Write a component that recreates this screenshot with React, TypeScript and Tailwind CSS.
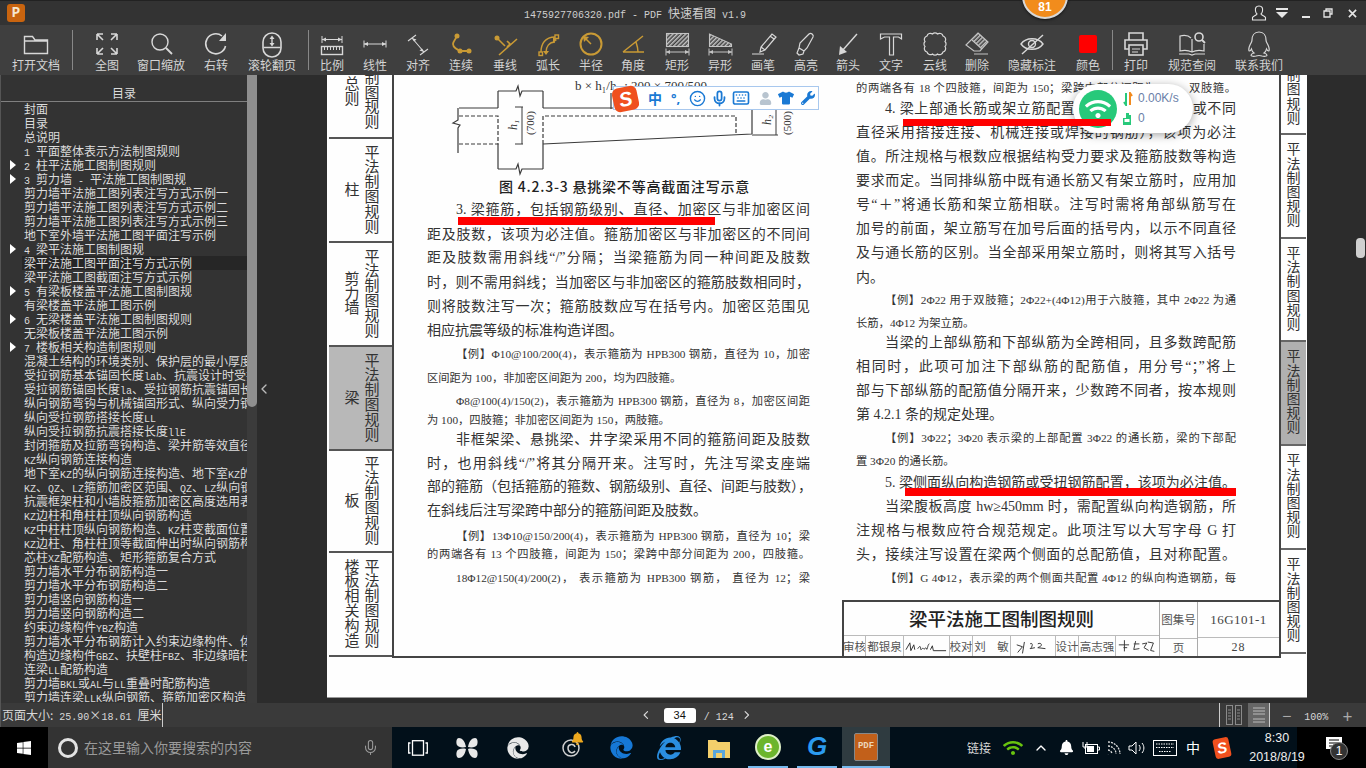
import { ChevronLeft, ChevronRight, ChevronUp, Keyboard, Mic, Smile } from "lucide-react";
import { FaBell, FaEdge, FaInternetExplorer, FaTshirt, FaUser, FaWifi, FaWindows, FaWrench } from "react-icons/fa";

const gold = "text-[#c99a35]";

const Ico = ({ children, className = "" }: { children: React.ReactNode; className?: string }) => (
  <svg viewBox="0 0 32 32" className={`w-8 h-8 shrink-0 ${className}`} fill="none" stroke="currentColor" strokeWidth="1.4">
    {children}
  </svg>
);

const Hatch = ({ id }: { id: string }) => (
  <defs>
    <pattern id={id} width="3" height="3" patternUnits="userSpaceOnUse" patternTransform="rotate(-45)">
      <rect width="3" height="1.5" fill="currentColor" stroke="none" />
    </pattern>
  </defs>
);

const Dim = ({ y, x1 = 6, x2 = 26 }: { y: number; x1?: number; x2?: number }) => (
  <>
    <path d={`M${x1} ${y - 3.5}v7M${x2} ${y - 3.5}v7M${x1} ${y}H${x2}`} strokeWidth="1" />
    <path d={`M${x1} ${y}l4-2v4zM${x2} ${y}l-4-2v4z`} fill="currentColor" stroke="none" />
  </>
);

const tools = [
  { w: "w-[72px]", label: "打开文档", icon: <Ico><path d="M4.5 25.5V8.5h8l2.5 3.5h12.5v13.5zM4.5 13h23" /></Ico> },
  { sep: true, w: "mr-[13px]" },
  { w: "w-[42px]", label: "全图", icon: <Ico><path d="M6 6h6M6 6v6M6 6l6 6M26 6h-6M26 6v6M26 6l-6 6M6 26h6M6 26v-6M6 26l6-6M26 26h-6M26 26v-6M26 26l-6-6" strokeWidth="1.6" /></Ico> },
  { w: "w-[66px]", label: "窗口缩放", icon: <Ico><circle cx="15" cy="14" r="8" /><path d="M21 20l6 6" strokeWidth="1.8" /></Ico> },
  { w: "w-[44px]", label: "右转", icon: <Ico><path d="M25.5 18A10 10 0 1 1 22 8" strokeWidth="1.6" /><path d="M26 5v8h-7z" fill="currentColor" stroke="none" /></Ico> },
  { w: "w-[68px]", label: "滚轮翻页", icon: <Ico><rect x="7" y="5" width="18" height="24" rx="9" strokeWidth="1.6" /><path d="M7.5 19.5h17M16 11v5" /><path d="M16 7.5l2.5 3.5h-5zM16 18.5l2.5-3.5h-5z" fill="currentColor" stroke="none" /></Ico> },
  { sep: true, w: "ml-[2px]" },
  { w: "w-[46px]", label: "比例", icon: <Ico><Dim y={11.5} /><rect x="5.5" y="18.5" width="21" height="8" /><path d="M8.5 19v3M11.5 19v3M14.5 19v3M17.5 19v3M20.5 19v3M23.5 19v3" strokeWidth="1" /></Ico> },
  { w: "w-[40px]", label: "线性", icon: <Ico><Dim y={16} x1={5} x2={27} /></Ico> },
  { w: "w-[46px]", label: "对齐", icon: <Ico><path d="M6 13l8-6M18 27l8-6M10 10l12 14" strokeWidth="1.1" /><path d="M10 10l4.5 1.5-2.5 2zM22 24l-4.5-1.5 2.5-2z" fill="currentColor" stroke="none" /></Ico> },
  { w: "w-[40px]", label: "连续", tone: gold, icon: <Ico><path d="M12 8c-1 3-4 5-4 8 0 3 4 6 8 7h8" strokeWidth="1.8" /><circle cx="12" cy="8" r="2.5" fill="currentColor" stroke="none" /><circle cx="15" cy="23" r="2.5" fill="currentColor" stroke="none" /><circle cx="24" cy="23" r="2.5" fill="currentColor" stroke="none" /></Ico> },
  { w: "w-[48px]", label: "垂线", tone: gold, icon: <Ico><path d="M28 11L10 27M8 10l8 8M18 13l3 3-3 3" strokeWidth="1.6" /><circle cx="8" cy="10" r="2.5" fill="currentColor" stroke="none" /></Ico> },
  { w: "w-[38px]", label: "弧长", tone: gold, icon: <Ico><path d="M9 24c0-8 4-15 14-15M14 24c0-5 3-10 9-10" /><rect x="7" y="24" width="3.5" height="3.5" /><rect x="23" y="7" width="3.5" height="3.5" /><path d="M14 27l-3-4h6zM25 12l-4-3v6z" fill="currentColor" stroke="none" /></Ico> },
  { w: "w-[48px]", label: "半径", tone: gold, icon: <Ico><circle cx="16" cy="16" r="10.5" strokeWidth="2" /><path d="M16 16l-6-6" strokeWidth="1.5" /><path d="M8 8l6 1-5 5z" fill="currentColor" stroke="none" /></Ico> },
  { w: "w-[36px]", label: "角度", tone: gold, icon: <Ico><path d="M6 24h21M6 24L26 8M19 14c1 3 2 6 2 10" strokeWidth="1.5" /></Ico> },
  { w: "w-[52px]", label: "矩形", icon: <Ico className="text-[#c4c4c4]"><Hatch id="h1" /><rect x="5.5" y="5.5" width="22" height="13" fill="url(#h1)" strokeWidth="1.1" /><Dim y={24} x1={5} x2={28} /></Ico> },
  { w: "w-[34px]", label: "异形", icon: <Ico className="text-[#c4c4c4]"><Hatch id="h2" /><path d="M5.5 6v12.5h22V16z" fill="url(#h2)" strokeWidth="1.1" /><Dim y={24} x1={5} x2={28} /></Ico> },
  { w: "w-[52px]", label: "画笔", icon: <Ico><path d="M5 26h12M13 24l1-5 11-13 4 3-11 13zM14 19l4 3M23 8l4 3" strokeWidth="1.2" /></Ico> },
  { w: "w-[34px]", label: "高亮", icon: <Ico><path d="M9 27l-2-2 2-5 5 3-1 3zM9 20l1-5 9-9c2-2 5 1 4 3l-6 11-3 3z" strokeWidth="1.2" /></Ico> },
  { w: "w-[50px]", label: "箭头", icon: <Ico><path d="M25 6L10 23" /><path d="M7 27l1-9 7 6z" fill="currentColor" stroke="none" /></Ico> },
  { w: "w-[36px]", label: "文字", icon: <Ico><path d="M5.5 6h21v5l-3-2h-5v18h-4V9h-5l-4 2z" strokeWidth="1.2" /></Ico> },
  { w: "w-[52px]", label: "云线", icon: <Ico><path d="M8 8a3.5 3.5 0 0 1 5.5-2a3.5 3.5 0 0 1 5 0a3.5 3.5 0 0 1 5.5 2a3.5 3.5 0 0 1 2 5.5a3.5 3.5 0 0 1 0 5a3.5 3.5 0 0 1-2 5.5a3.5 3.5 0 0 1-5.5 2a3.5 3.5 0 0 1-5 0a3.5 3.5 0 0 1-5.5-2a3.5 3.5 0 0 1-2-5.5a3.5 3.5 0 0 1 0-5a3.5 3.5 0 0 1 2-5.5z" strokeWidth="1.2" /></Ico> },
  { w: "w-[32px]", label: "删除", icon: <Ico className="text-[#c4c4c4]"><Hatch id="h3" /><path d="M17 5l10 9-8 9h-6l-8-6z" strokeWidth="1.2" /><path d="M17 5l10 9-6 7-10-9z" fill="url(#h3)" stroke="none" /><path d="M11 12l10 9M13 26h14" strokeWidth="1.2" /></Ico> },
  { w: "w-[78px]", label: "隐藏标注", icon: <Ico><path d="M5 16c5-7 17-7 22 0-5 7-17 7-22 0z" /><circle cx="16" cy="16" r="3.5" /><path d="M27 7L6 26" /></Ico> },
  { w: "w-[34px]", label: "颜色", icon: <div className="w-8 h-8 flex items-center justify-center"><div className="w-[18px] h-[18px] rounded-[2px] bg-[#ff0000]" /></div> },
  { sep: true, w: "ml-[7px]" },
  { w: "w-[46px]", label: "打印", icon: <Ico><path d="M9 12V5h14v7M9 21H5V12h22v9h-4" strokeWidth="1.6" /><rect x="9" y="17" width="14" height="10" strokeWidth="1.6" /><path d="M12 21h8M12 24h6" strokeWidth="1" /></Ico> },
  { w: "w-[66px]", label: "规范查阅", icon: <Ico><path d="M15 10c-3-3-7-3-11-2v15c4-1 8-1 12 1 4-2 8-2 12-1v-7M16 11v13M3 26h10l3 1 3-1h10" strokeWidth="1.2" /><circle cx="23" cy="9" r="4" strokeWidth="1.6" /><path d="M26 12l3 3" strokeWidth="1.8" /></Ico> },
  { w: "w-[68px]", label: "联系我们", icon: <Ico><path d="M16 4c-5 0-7 4-7 8 0 2-1 3-2 5-1.5 3-1.5 6-.5 6 .7 0 1.5-1 2-2 .3 1.5 1 3 2.5 4-1.5.5-3 1.2-3 2.2 0 1.2 3 1.3 5 .8 1-.3 2-.5 3-.5s2 .2 3 .5c2 .5 5 .4 5-.8 0-1-1.5-1.7-3-2.2 1.5-1 2.2-2.5 2.5-4 .5 1 1.3 2 2 2 1 0 1-3-.5-6-1-2-2-3-2-5 0-4-2-8-7-8z" strokeWidth="1.2" /></Ico> },
] as { w: string; label?: string; icon?: React.ReactNode; tone?: string; sep?: boolean }[];

// the app's bitmap font has half-width latin, so latin runs get their own span
const Mixed = ({ text }: { text: string }) => (
  <>
    {text.split(/([\x00-\x7f]+)/).map((part, i) =>
      i % 2 ? (
        <span key={i} className="font-['Liberation_Mono',monospace] text-[10px] whitespace-pre">
          {part}
        </span>
      ) : (
        part
      )
    )}
  </>
);

const toc: [string, boolean?, boolean?][] = [
  ["封面"], ["目录"], ["总说明"], ["1 平面整体表示方法制图规则"],
  ["2 柱平法施工图制图规则", true], ["3 剪力墙 - 平法施工图制图规", true],
  ["剪力墙平法施工图列表注写方式示例一"], ["剪力墙平法施工图列表注写方式示例二"], ["剪力墙平法施工图列表注写方式示例三"],
  ["地下室外墙平法施工图平面注写示例"], ["4 梁平法施工图制图规", true],
  ["梁平法施工图平面注写方式示例", false, true], ["梁平法施工图截面注写方式示例"],
  ["5 有梁板楼盖平法施工图制图规", true], ["有梁楼盖平法施工图示例"],
  ["6 无梁楼盖平法施工图制图规则", true], ["无梁板楼盖平法施工图示例"], ["7 楼板相关构造制图规则", true],
  ["混凝土结构的环境类别、保护层的最小厚度"], ["受拉钢筋基本锚固长度lab、抗震设计时受拉钢筋"],
  ["受拉钢筋锚固长度la、受拉钢筋抗震锚固长度"], ["纵向钢筋弯钩与机械锚固形式、纵向受力钢筋"],
  ["纵向受拉钢筋搭接长度LL"], ["纵向受拉钢筋抗震搭接长度llE"], ["封闭箍筋及拉筋弯钩构造、梁并筋等效直径"],
  ["KZ纵向钢筋连接构造"], ["地下室KZ的纵向钢筋连接构造、地下室KZ的"], ["KZ、QZ、LZ箍筋加密区范围、QZ、LZ纵向钢筋"],
  ["抗震框架柱和小墙肢箍筋加密区高度选用表"], ["KZ边柱和角柱柱顶纵向钢筋构造"], ["KZ中柱柱顶纵向钢筋构造、KZ柱变截面位置"],
  ["KZ边柱、角柱柱顶等截面伸出时纵向钢筋构造"], ["芯柱XZ配筋构造、矩形箍筋复合方式"],
  ["剪力墙水平分布钢筋构造一"], ["剪力墙水平分布钢筋构造二"], ["剪力墙竖向钢筋构造一"], ["剪力墙竖向钢筋构造二"],
  ["约束边缘构件YBZ构造"], ["剪力墙水平分布钢筋计入约束边缘构件、体"], ["构造边缘构件GBZ、扶壁柱FBZ、非边缘暗柱"],
  ["连梁LL配筋构造"], ["剪力墙BKL或AL与LL重叠时配筋构造"], ["剪力墙连梁LLK纵向钢筋、箍筋加密区构造"],
];

type Line = { h: string; t: string; small?: boolean; indent?: string; left?: boolean };

const leftLines: Line[] = [
  { h: "h-[25px]", indent: "pl-[29px]", t: "3. 梁箍筋,包括钢筋级别、直径、加密区与非加密区间" },
  { h: "h-[23px]", t: "距及肢数,该项为必注值。箍筋加密区与非加密区的不同间" },
  { h: "h-[25px]", t: "距及肢数需用斜线“/”分隔;当梁箍筋为同一种间距及肢数" },
  { h: "h-[24px]", t: "时,则不需用斜线;当加密区与非加密区的箍筋肢数相同时," },
  { h: "h-[24px]", t: "则将肢数注写一次;箍筋肢数应写在括号内。加密区范围见" },
  { h: "h-[23px]", t: "相应抗震等级的标准构造详图。", left: true },
  { h: "h-[24px]", small: true, indent: "pl-[29px]", t: "【例】Φ10@100/200(4),表示箍筋为 HPB300 钢筋,直径为 10,加密" },
  { h: "h-[23px]", small: true, left: true, t: "区间距为 100,非加密区间距为 200,均为四肢箍。" },
  { h: "h-[19px]", small: true, indent: "pl-[29px]", t: "Φ8@100(4)/150(2),表示箍筋为 HPB300 钢筋,直径为 8,加密区间距" },
  { h: "h-[20px]", small: true, left: true, t: "为 100,四肢箍;非加密区间距为 150,两肢箍。" },
  { h: "h-[24px]", indent: "pl-[29px]", t: "非框架梁、悬挑梁、井字梁采用不同的箍筋间距及肢数" },
  { h: "h-[23px]", t: "时,也用斜线“/”将其分隔开来。注写时,先注写梁支座端" },
  { h: "h-[24px]", t: "部的箍筋(包括箍筋的箍数、钢筋级别、直径、间距与肢数)," },
  { h: "h-[25px]", left: true, t: "在斜线后注写梁跨中部分的箍筋间距及肢数。" },
  { h: "h-[18px]", small: true, indent: "pl-[29px]", t: "【例】13Φ10@150/200(4),表示箍筋为 HPB300 钢筋,直径为 10;梁" },
  { h: "h-[24px]", small: true, t: "的两端各有 13 个四肢箍,间距为 150;梁跨中部分间距为 200,四肢箍。" },
  { h: "h-[24px]", small: true, indent: "pl-[29px]", t: "18Φ12@150(4)/200(2), 表示箍筋为 HPB300 钢筋, 直径为 12;梁" },
];

const rightLines: Line[] = [
  { h: "h-[21px]", small: true, t: "的两端各有 18 个四肢箍,间距为 150;梁跨中部分间距为 200,双肢箍。" },
  { h: "h-[24px]", indent: "pl-[29px]", t: "4. 梁上部通长筋或架立筋配置(通长筋可为相同或不同" },
  { h: "h-[24px]", t: "直径采用搭接连接、机械连接或焊接的钢筋),该项为必注" },
  { h: "h-[24px]", t: "值。所注规格与根数应根据结构受力要求及箍筋肢数等构造" },
  { h: "h-[24px]", t: "要求而定。当同排纵筋中既有通长筋又有架立筋时,应用加" },
  { h: "h-[24px]", t: "号“+”将通长筋和架立筋相联。注写时需将角部纵筋写在" },
  { h: "h-[24px]", t: "加号的前面,架立筋写在加号后面的括号内,以示不同直径" },
  { h: "h-[25px]", t: "及与通长筋的区别。当全部采用架立筋时,则将其写入括号" },
  { h: "h-[22px]", left: true, t: "内。" },
  { h: "h-[23px]", small: true, indent: "pl-[29px]", t: "【例】2Φ22 用于双肢箍;2Φ22+(4Φ12)用于六肢箍,其中 2Φ22 为通" },
  { h: "h-[20px]", small: true, left: true, t: "长筋,4Φ12 为架立筋。" },
  { h: "h-[24px]", indent: "pl-[29px]", t: "当梁的上部纵筋和下部纵筋为全跨相同,且多数跨配筋" },
  { h: "h-[24px]", t: "相同时,此项可加注下部纵筋的配筋值,用分号“;”将上" },
  { h: "h-[24px]", t: "部与下部纵筋的配筋值分隔开来,少数跨不同者,按本规则" },
  { h: "h-[23px]", left: true, t: "第 4.2.1 条的规定处理。" },
  { h: "h-[23px]", small: true, indent: "pl-[29px]", t: "【例】3Φ22;3Φ20 表示梁的上部配置 3Φ22 的通长筋,梁的下部配" },
  { h: "h-[22px]", small: true, left: true, t: "置 3Φ20 的通长筋。" },
  { h: "h-[24px]", indent: "pl-[29px]", t: "5. 梁侧面纵向构造钢筋或受扭钢筋配置,该项为必注值。" },
  { h: "h-[24px]", indent: "pl-[29px]", t: "当梁腹板高度 hw≥450mm 时,需配置纵向构造钢筋,所" },
  { h: "h-[24px]", t: "注规格与根数应符合规范规定。此项注写以大写字母 G 打" },
  { h: "h-[23px]", t: "头,接续注写设置在梁两个侧面的总配筋值,且对称配置。" },
  { h: "h-[24px]", small: true, indent: "pl-[29px]", t: "【例】G 4Φ12,表示梁的两个侧面共配置 4Φ12 的纵向构造钢筋,每" },
];

// print punctuation is full width; "(4)" style spec brackets stay narrow
const fullWidth = (t: string) =>
  t
    .replace(/,/g, "\uff0c")
    .replace(/;/g, "\uff1b")
    .replace(/\((?=\D)/g, "\uff08")
    .replace(/(\D)\)/g, "$1\uff09")
    .replace("“+”", "“\uff0b”");

const TextLines = ({ lines }: { lines: Line[] }) => (
  <>
    {lines.map((l) => (
      <div
        key={l.t}
        className={`${l.h} whitespace-nowrap leading-[24px] ${l.indent ?? ""} ${l.small ? "text-[11.3px]" : "text-[14px]"} ${
          l.left ? "" : "[text-align:justify] [text-align-last:justify]"
        }`}
      >
        {fullWidth(l.t)}
      </div>
    ))}
  </>
);

const leftTabs = [
  { h: "h-[64px]", label: "总则", top: true },
  { h: "h-[104px]", label: "柱" },
  { h: "h-[104px]", label: "剪力墙" },
  { h: "h-[104px]", label: "梁", active: true },
  { h: "h-[102px]", label: "板" },
  { h: "h-[104px]", label: "楼板相关构造" },
];

const Vertical = ({ text, className = "" }: { text: string; className?: string }) => (
  <div className={`flex flex-col items-center ${className}`}>
    {text.split("").map((c, i) => (
      <span key={i}>{c}</span>
    ))}
  </div>
);

const LeftTabs = () => (
  <div className="w-[65px] shrink-0 flex flex-col pl-[2px] text-[15px] leading-[14.8px] text-[#333]">
    {leftTabs.map((tab) => (
      <div
        key={tab.label}
        className={`${tab.h} shrink-0 flex overflow-hidden border-b-2 border-[#555] ${tab.active ? "bg-[#b8b8b8]" : ""} ${
          tab.top ? "items-end pb-[7px]" : "items-center"
        }`}
      >
        <Vertical text={tab.label} className={`w-[20px] ml-[13px] ${tab.top ? "mb-[23px]" : ""}`} />
        <Vertical text="平法制图规则" className="w-[20px]" />
      </div>
    ))}
  </div>
);

const RightTabs = () => (
  <div className="w-[25px] shrink-0 flex flex-col text-[14px] leading-[14.2px] text-[#333]">
    {["h-[60px]", "h-[104px]", "h-[103px]", "h-[104px]", "h-[104px]", "h-[104px]"].map((h, i) => (
      <div
        key={i}
        className={`${h} shrink-0 flex justify-center overflow-hidden border-b-2 border-[#666] ${i === 3 ? "bg-[#b0b0b0]" : ""} ${
          i === 0 ? "items-end pb-[7px]" : "items-center"
        }`}
      >
        <Vertical text="平法制图规则" />
      </div>
    ))}
  </div>
);

// beam drawing, coordinates are column-local
const BeamDrawing = () => (
  <svg viewBox="0 0 383 100" className="w-[383px] h-[100px] block overflow-visible" fill="none" stroke="#3a3a3a" strokeWidth="1.2">
    <path d="M31 33v12l-5 3 7 2-2 3v25M32 33h39M71 16v17M71 69v25M116 16v17M116 69v25M71 16h18l2-5 2 10 2-5h21M71 94h18l2-5 2 10 2-5h21M116 33h209M325 33v26M116 69l209-10M184 18v16" />
    <path d="M32 41h39v28H32M116 69V41h193v19" strokeDasharray="4 2" />
    <path d="M95 32v37M88 32h8M88 69h8M325 60h26M349 30v30" strokeWidth="1" />
    <text x="148" y="15" fontSize="13" fill="#333" stroke="none" fontFamily="Liberation Serif">b × h₁/h₂ : 200 × 700/500</text>
    <text transform="translate(90 55) rotate(-90)" fontSize="12" fill="#333" stroke="none" fontStyle="italic" fontFamily="Liberation Serif">h₁</text>
    <text transform="translate(107 60) rotate(-90)" fontSize="11" fill="#333" stroke="none" fontFamily="Liberation Serif">(700)</text>
    <text transform="translate(344 50) rotate(-90)" fontSize="12" fill="#333" stroke="none" fontStyle="italic" fontFamily="Liberation Serif">h₂</text>
    <text transform="translate(364 60) rotate(-90)" fontSize="11" fill="#333" stroke="none" fontFamily="Liberation Serif">(500)</text>
  </svg>
);

const Scribble = ({ d }: { d: string }) => (
  <svg viewBox="0 0 46 20" className="w-full h-full" fill="none" stroke="#333" strokeWidth="1">
    <path d={d} />
  </svg>
);

const cells = [
  { w: "w-[22px]", t: "审核" },
  { w: "w-[38px]", t: "都银泉" },
  { w: "w-[46px]", d: "M2 14l4-7 1 8 3-6 1 5M14 13c2-3 3-3 3 0s2-2 3 0 2-3 3 0 1-5 3-5M27 14l2-4 1 5h13" },
  { w: "w-[23px]", t: "校对" },
  { w: "w-[38px]", t: "刘　敏" },
  { w: "w-[45px]", d: "M6 9l6 2-5 6M14 6l-2 12M20 8c3-2 3 3 0 5l5-1M28 8c4-2 5 2 2 3l-2 1 8 1" },
  { w: "w-[23px]", t: "设计" },
  { w: "w-[37px]", t: "高志强" },
  { w: "w-[44px]", d: "M3 9h11M9 4v12M8 12h4M19 8h6M21 5l-2 9 6-1M28 8l5-1-3 5 5 3M34 6l6 1-3 8 4 1" },
];

const TitleBlock = () => (
  <div className="w-[437px] h-[56px] ml-auto flex border-t-2 border-l-2 border-[#444] text-[#333] font-['Noto_Sans_CJK_SC',sans-serif]">
    <div className="w-[315px] flex flex-col shrink-0">
      <div className="h-[36px] flex items-center justify-center text-[18.5px] font-medium text-[#222]">梁平法施工图制图规则</div>
      <div className="flex-1 flex border-t border-[#bbb] text-[11.5px] text-[#555] whitespace-nowrap">
        {cells.map((c, i) => (
          <div key={i} className={`${c.w} shrink-0 flex items-center justify-center border-r border-[#bbb] overflow-hidden`}>
            {c.t ?? <Scribble d={c.d as string} />}
          </div>
        ))}
      </div>
    </div>
    <div className="w-[38px] shrink-0 flex flex-col border-l border-[#aaa] text-[11.5px] text-[#555]">
      <div className="h-[36px] flex items-center justify-center whitespace-nowrap">图集号</div>
      <div className="flex-1 flex items-center justify-center border-t border-[#bbb]">页</div>
    </div>
    <div className="flex-1 flex flex-col border-l border-[#aaa] font-['Liberation_Serif',serif] text-[#444]">
      <div className="h-[36px] flex items-center justify-center text-[13px] tracking-[0.5px]">16G101-1</div>
      <div className="flex-1 flex items-center justify-center border-t border-[#bbb] text-[12px] tracking-[1px]">28</div>
    </div>
  </div>
);

const DocPage = () => (
  <div className="relative w-[980px] h-[623px] shrink-0 bg-[#fefefe] border-b border-[#999] flex font-['Liberation_Serif','Noto_Sans_CJK_SC',serif] text-[#333] overflow-hidden">
    <LeftTabs />
    <div className="w-[889px] h-[583px] shrink-0 flex flex-col border-l-2 border-b-2 border-r-2 border-[#444]">
      <div className="h-[525px] flex shrink-0">
        <div className="w-[383px] ml-[33px] shrink-0">
          <BeamDrawing />
          <div className="h-[23px] text-center leading-[22px] text-[14px] tracking-[0.8px] font-medium text-[#222] pl-[12px] whitespace-nowrap font-['Noto_Sans_CJK_SC',sans-serif]">
            图 4.2.3-3 悬挑梁不等高截面注写示意
          </div>
          <TextLines lines={leftLines} />
        </div>
        <div className="w-[380px] ml-[46px] shrink-0 pt-[1px]">
          <TextLines lines={rightLines} />
        </div>
      </div>
      <TitleBlock />
    </div>
    <RightTabs />
    {/* red annotations sit on top of the page */}
    <div className="absolute left-[131px] top-[142px] w-[257px] h-[8px] bg-[#ff0000]" />
    <div className="absolute left-[576px] top-[44px] w-[208px] h-[7px] bg-[#ff0000] z-20" />
    <div className="absolute left-[578px] top-[413px] w-[331px] h-[8px] bg-[#ff0000]" />
  </div>
);

const SogouBar = () => (
  <div className="absolute left-[613px] top-[86px] w-[206px] h-[24px] bg-white border border-[#a8c8ee] flex items-center text-[#1a79d4] z-30">
    <div className="w-[25px] h-[24px] -ml-[1px] mt-[1px] rounded-[6px] bg-[#f0501e] -rotate-12 flex items-center justify-center text-white text-[20px] font-bold font-['Liberation_Sans',sans-serif] italic">
      S
    </div>
    <span className="ml-[10px] text-[14px] font-bold font-['Noto_Sans_CJK_SC',sans-serif]">中</span>
    <span className="ml-[9px] text-[13px] font-bold w-[14px] leading-none">°,</span>
    <Smile size={17} className="ml-[4px]" strokeWidth={2} />
    <Mic size={17} className="ml-[5px]" strokeWidth={2.5} />
    <Keyboard size={18} className="ml-[4px]" strokeWidth={2.2} />
    <FaUser size={13} className="ml-[9px] text-[#b8c4cf]" />
    <FaTshirt size={16} className="ml-[6px]" />
    <FaWrench size={14} className="ml-[7px]" />
  </div>
);

const NetWidget = () => (
  <div className="absolute left-[1073px] top-[84px] w-[120px] h-[49px] rounded-full bg-white shadow-[0_2px_10px_rgba(0,0,0,0.35)] flex items-center pl-[6px] z-10">
    <div className="w-[38px] h-[38px] rounded-full bg-[#27c97a] flex items-center justify-center text-white">
      <FaWifi size={26} />
    </div>
    <div className="ml-[6px] flex flex-col gap-[5px] text-[12px] leading-[15px] text-[#6a80a8] font-['Liberation_Sans',sans-serif]">
      <div className="flex items-center gap-[5px]">
        <svg viewBox="0 0 10 14" className="w-[10px] h-[14px]"><path d="M3 1v12L1 10" stroke="#27c97a" strokeWidth="2" fill="none" /><path d="M7 13V1l2 3" stroke="#f28a1e" strokeWidth="2" fill="none" /></svg>
        0.00K/s
      </div>
      <div className="flex items-center gap-[7px]">
        <svg viewBox="0 0 8 12" className="w-[8px] h-[12px]"><path d="M3 0h3v2h2v10H0V5h3z" fill="#27c97a" /><rect x="1.5" y="6" width="5" height="3" fill="#fff" /></svg>
        0
      </div>
    </div>
  </div>
);

const TitleBar = () => (
  <div className="relative h-[25px] shrink-0 bg-[#333333] border-t border-[#222] flex items-center text-[#cfcfcf] font-['Noto_Sans_CJK_SC',sans-serif] text-[12px]">
    <div className="w-[18px] h-[18px] ml-[7px] rounded-[3px] bg-[#c9640f] flex items-center justify-center text-[#f6e6cf] text-[14px] font-bold font-['Liberation_Mono',monospace]">
      P
    </div>
    <div className="ml-[499px] whitespace-pre"><Mixed text="1475927706320.pdf - PDF " />快速看图<Mixed text=" v1.9" /></div>
    <div className="ml-auto flex items-center text-[#e6e6e6]">
      <svg viewBox="0 0 16 16" className="w-[16px] h-[16px] mr-[9px]" fill="none" stroke="currentColor" strokeWidth="1.1"><path d="M8 1c-3 0-4 2-3.5 5 .2 1.5 1 2.5 1.5 3 0 1-4 2-4.5 3.5V15h13v-2.500C14 11 10 10 10 9c.5-.5 1.3-1.5 1.5-3C12 3 11 1 8 1z" /></svg>
      <svg viewBox="0 0 12 10" className="w-[12px] h-[10px] mr-[14px]" fill="currentColor"><rect width="12" height="2" /><path d="M0 4h12L6 10z" /></svg>
      <div className="w-[8px] h-[2px] bg-current mt-[8px] mr-[13px]" />
      <svg viewBox="0 0 10 10" className="w-[10px] h-[10px] mr-[15px]" fill="none" stroke="currentColor" strokeWidth="1.3"><path d="M3 3V1h6v5H7M1 3h6v6H1z" /></svg>
      <svg viewBox="0 0 10 10" className="w-[9px] h-[9px] mr-[9px]" fill="none" stroke="currentColor" strokeWidth="1.8"><path d="M1 1l8 8M9 1l-8 8" /></svg>
    </div>
    <div className="absolute left-[1022px] -top-[28px] w-[46px] h-[46px] rounded-full bg-[#f28c1c] border-2 border-[#d8d8d8] shadow-[0_1px_3px_rgba(0,0,0,0.6)] flex items-end justify-center text-white text-[12px] font-bold font-['Liberation_Sans',sans-serif] leading-[16px] pb-[2px]">
      81
    </div>
  </div>
);

const Toolbar = () => (
  <div className="h-[50px] shrink-0 bg-[#3f3f3f] flex font-['Noto_Sans_CJK_SC',sans-serif] text-[12px] text-[#d4d4d4]">
    {tools.map((item, i) =>
      item.sep ? (
        <div key={i} className={`w-px h-[40px] mt-[5px] bg-[#888] shrink-0 ${item.w}`} />
      ) : (
        <div key={i} className={`${item.w} shrink-0 flex flex-col items-center pt-[3px]`}>
          <div className={item.tone ?? "text-[#d8d8d8]"}>{item.icon}</div>
          <div className="whitespace-nowrap leading-[14px] -mt-[2px]">{item.label}</div>
        </div>
      )
    )}
  </div>
);

const Sidebar = () => (
  <div className="w-[257px] shrink-0 flex h-full">
    <div className="w-[247px] h-full bg-[#333333] border-l border-[#555] font-['Noto_Sans_CJK_SC',sans-serif] text-[12px] text-[#dcdcdc] flex flex-col overflow-hidden">
      <div className="h-[27px] shrink-0 flex items-center justify-center border-b border-[#808080] pt-[12px] pb-[2px]">目录</div>
      <div className="h-[600px] overflow-hidden">
        {toc.map(([label, arrow, selected]) => (
          <div key={label} className={`h-[14px] leading-[14px] whitespace-nowrap ml-[21px] pl-[2px] ${selected ? "bg-[#262626]" : ""} relative`}>
            {arrow && <div className="absolute -left-[12px] top-[2px] border-y-[5px] border-y-transparent border-l-[6px] border-l-white" />}
            <Mixed text={label} />
          </div>
        ))}
      </div>
    </div>
    <div className="w-[10px] h-full bg-[#3b3b3b]">
      <div className="h-[332px] bg-[#8f8f8f] rounded-b-[5px]" />
    </div>
  </div>
);

const StatusBar = () => (
  <div className="h-[24px] shrink-0 bg-[#3a3a3a] flex items-center text-[#d8d8d8] font-['Noto_Sans_CJK_SC',sans-serif] text-[12px] border-l border-[#555]">
    <div className="w-[165px] pl-[1px] whitespace-pre"><span>页面大小:</span><Mixed text=" 25.90×18.61 " />厘米</div>
    <div className="w-px h-[24px] bg-[#ccc]" />
    <ChevronLeft size={14} className="ml-[476px]" />
    <div className="ml-[11px] w-[33px] h-[15px] rounded-[3px] bg-white text-[#111] flex items-center justify-center font-['Liberation_Sans',sans-serif] text-[11px]">34</div>
    <div className="ml-[8px] w-[33px] whitespace-pre"><Mixed text="/ 124" /></div>
    <ChevronRight size={14} className="ml-[4px]" />
    <div className="w-px h-[24px] bg-[#ccc] ml-[465px]" />
    <div className="w-[29px] flex justify-center">
      <svg viewBox="0 0 16 20" className="w-[16px] h-[20px] text-[#8a8a8a]" fill="none" stroke="currentColor"><rect x=".5" y=".5" width="6" height="19" /><rect x="9.5" y=".5" width="6" height="19" /><path d="M2 5h3M2 8h3M2 11h3M2 14h3M11 5h3M11 8h3M11 11h3M11 14h3" /></svg>
    </div>
    <div className="w-[22px] h-[24px] bg-[#666] flex items-center justify-center">
      <svg viewBox="0 0 14 20" className="w-[14px] h-[20px] text-[#bbb]" stroke="currentColor"><path d="M1 3h12M1 6h12M1 9h12M1 14h12M1 17h12" /></svg>
    </div>
    <div className="w-px h-[24px] bg-[#ccc]" />
    <div className="w-[34px] text-center text-[16px] text-[#aaa] leading-none">−</div>
    <div className="w-[26px] text-center whitespace-pre"><Mixed text="100%" /></div>
    <div className="w-[38px] text-center text-[17px] text-[#aaa] leading-none">+</div>
  </div>
);

const Taskbar = () => (
  <div className="h-[41px] shrink-0 bg-[#02101a] flex items-stretch text-white font-['Noto_Sans_CJK_SC',sans-serif]">
    <div className="w-[48px] bg-black flex items-center justify-center"><FaWindows size={16} /></div>
    <div className="w-[344px] bg-[#333333] flex items-center text-[14px] text-[#9a9a9a]">
      <div className="w-[20px] h-[20px] ml-[10px] rounded-full border-[3px] border-[#e2e2e2]" />
      <span className="ml-[6px]">在这里输入你要搜索的内容</span>
      <Mic size={17} className="ml-[110px]" strokeWidth={1.5} />
    </div>
    <div className="w-[51px] flex items-center justify-center">
      <svg viewBox="0 0 20 16" className="w-[20px] h-[16px]" fill="none" stroke="#fff" strokeWidth="1.3"><rect x="4.5" y=".7" width="11" height="14.5" /><path d="M2.5 3H.7v10h1.8M17.5 3h1.8v10h-1.8" /></svg>
    </div>
    <div className="w-[48px] flex items-center justify-center">
      <svg viewBox="0 0 22 22" className="w-[22px] h-[22px]" fill="#e8e8e8"><path d="M10 10C9 4 6 1 3 1S0 6 1 8s5 3 9 2zM12 10c1-6 4-9 7-9s3 5 2 7-5 3-9 2zM10 12c-1 6-4 9-7 9s-3-5-2-7 5-3 9-2zM12 12c1 6 4 9 7 9s3-5 2-7-5-3-9-2z" /></svg>
    </div>
    <div className="w-[54px] flex items-center justify-center"><FaEdge size={22} className="text-[#e8e8e8]" /></div>
    <div className="w-[52px] flex items-center justify-center relative">
      <svg viewBox="0 0 20 20" className="w-[20px] h-[20px]" fill="none" stroke="#d0d0d0" strokeWidth="1.5"><circle cx="10" cy="10" r="8" /><path d="M14 13c-2 3-7 2-7-3 0-4 6-5 7-1" /></svg>
      <FaBell size={13} className="absolute left-[26px] top-[5px] text-[#eda81e]" />
    </div>
    <div className="w-[48px] flex items-center justify-center"><FaEdge size={23} className="text-[#1678d6]" /></div>
    <div className="w-[48px] flex items-center justify-center"><FaInternetExplorer size={24} className="text-[#2a8ee0]" /></div>
    <div className="w-[51px] flex items-center justify-center">
      <svg viewBox="0 0 22 20" className="w-[22px] h-[20px]"><path d="M0 2h8l2 2h12v16H0z" fill="#f3cf6b" /><rect x="5" y="12" width="12" height="8" fill="#5aa6dc" /><rect x="8" y="15" width="6" height="5" fill="#f3cf6b" /></svg>
    </div>
    <div className="w-[40px] mx-[4px] flex items-center justify-center border-b-2 border-[#76b9ed]">
      <div className="w-[26px] h-[26px] rounded-full bg-[#6cb52d] border-2 border-[#dff0c8] flex items-center justify-center text-white text-[16px] font-bold font-['Liberation_Sans',sans-serif]">e</div>
    </div>
    <div className="w-[40px] ml-[5px] flex items-center justify-center border-b-2 border-[#76b9ed] text-[#2b9bf0] text-[26px] font-bold font-['Liberation_Sans',sans-serif] italic">G</div>
    <div className="w-[48px] ml-[5px] bg-[#2f3b40] flex items-center justify-center border-b-2 border-[#76b9ed]">
      <div className="w-[24px] h-[28px] rounded-[2px] bg-[#c2601a] border border-[#888] text-[9px] text-[#ecd6b8] font-bold font-['Liberation_Mono',monospace] flex items-center justify-center">PDF</div>
    </div>
    <div className="w-[34px] ml-[72px] flex items-center justify-center text-[12px] text-[#d8d8d8] whitespace-nowrap">链接</div>
    <div className="w-[34px] flex items-center justify-center"><FaWifi size={20} className="text-[#69c40f]" /></div>
    <div className="w-[22px] flex items-center justify-center"><ChevronUp size={16} /></div>
    <div className="w-[28px] flex items-center justify-center"><FaBell size={15} /></div>
    <div className="w-[22px] flex items-center justify-center">
      <svg viewBox="0 0 18 14" className="w-[18px] h-[14px]" fill="none" stroke="#fff"><rect x="3.5" y="3.5" width="12" height="9" /><rect x="5" y="5" width="7" height="6" fill="#fff" stroke="none" /><path d="M1 1v5h4V1M3 6v2M16 6h1.5v3H16" /></svg>
    </div>
    <div className="w-[24px] flex items-center justify-center">
      <svg viewBox="0 0 16 16" className="w-[16px] h-[16px]" fill="none" stroke="#ddd"><path d="M2 14a1 1 0 0 1 0 .1M2 10c2 0 4 2 4 4M2 6c4.5 0 8 3.5 8 8M2 2c6.5 0 12 5.5 12 12" strokeWidth="1.3" strokeDasharray="2 1" /></svg>
    </div>
    <div className="w-[22px] flex items-center justify-center">
      <svg viewBox="0 0 18 14" className="w-[18px] h-[14px]" fill="none" stroke="#fff"><path d="M1 5h3l4-4v12L4 9H1zM11 4c1.5 2 1.5 4 0 6M14 2c2.5 3 2.5 7 0 10" /></svg>
    </div>
    <div className="w-[34px] flex items-center justify-center">
      <svg viewBox="0 0 24 16" className="w-[24px] h-[16px]" fill="none" stroke="#fff"><rect x=".5" y=".5" width="23" height="15" /><path d="M3 4h18M3 7.5h18M6 11.5h12" strokeDasharray="1.5 1" /></svg>
    </div>
    <div className="w-[22px] flex items-center justify-center text-[14px]">中</div>
    <div className="w-[36px] flex items-center justify-center">
      <div className="w-[16px] h-[20px] rounded-[3px] bg-[#f0501e] -rotate-12 flex items-center justify-center text-white text-[15px] font-bold font-['Liberation_Sans',sans-serif] italic">S</div>
    </div>
    <div className="w-[74px] flex flex-col items-center justify-center text-[12.5px] leading-[19px] font-['Liberation_Sans',sans-serif] text-[#eee] bg-[linear-gradient(90deg,#02101a_57px,#000_57px)]">
      <span>8:30</span>
      <span className="whitespace-nowrap">2018/8/19</span>
    </div>
    <div className="flex-1 bg-black relative flex items-center justify-center">
      <svg viewBox="0 0 16 16" className="w-[16px] h-[16px] mr-[12px] -mt-[6px]" fill="#fff"><path d="M0 0h16v12H9l-3 4v-4H0z" /><path d="M3 3h10M3 6h10M3 9h10" stroke="#000" /></svg>
      <div className="absolute left-[16px] top-[15px] w-[18px] h-[18px] rounded-full bg-[#333] border border-[#888] flex items-center justify-center text-[12px] font-['Liberation_Sans',sans-serif]">1</div>
    </div>
  </div>
);

const App = () => {
  return (
    <div className="relative w-[1366px] h-[768px] flex flex-col overflow-hidden bg-[#2c2c2c]">
      <TitleBar />
      <Toolbar />
      <div className="h-[628px] shrink-0 flex bg-[#2c2c2c]">
        <Sidebar />
        <div className="w-[70px] shrink-0 flex items-start pt-[306px] text-[#bbb]">
          <ChevronLeft size={16} className="-ml-[1px]" />
        </div>
        <DocPage />
        <div className="flex-1 flex justify-end pt-[163px] pr-[1px]">
          <div className="w-[9px] h-[20px] rounded-[4px] bg-[#d0d0d0]" />
        </div>
      </div>
      <StatusBar />
      <Taskbar />
      <SogouBar />
      <NetWidget />
    </div>
  );
};

export default App;
